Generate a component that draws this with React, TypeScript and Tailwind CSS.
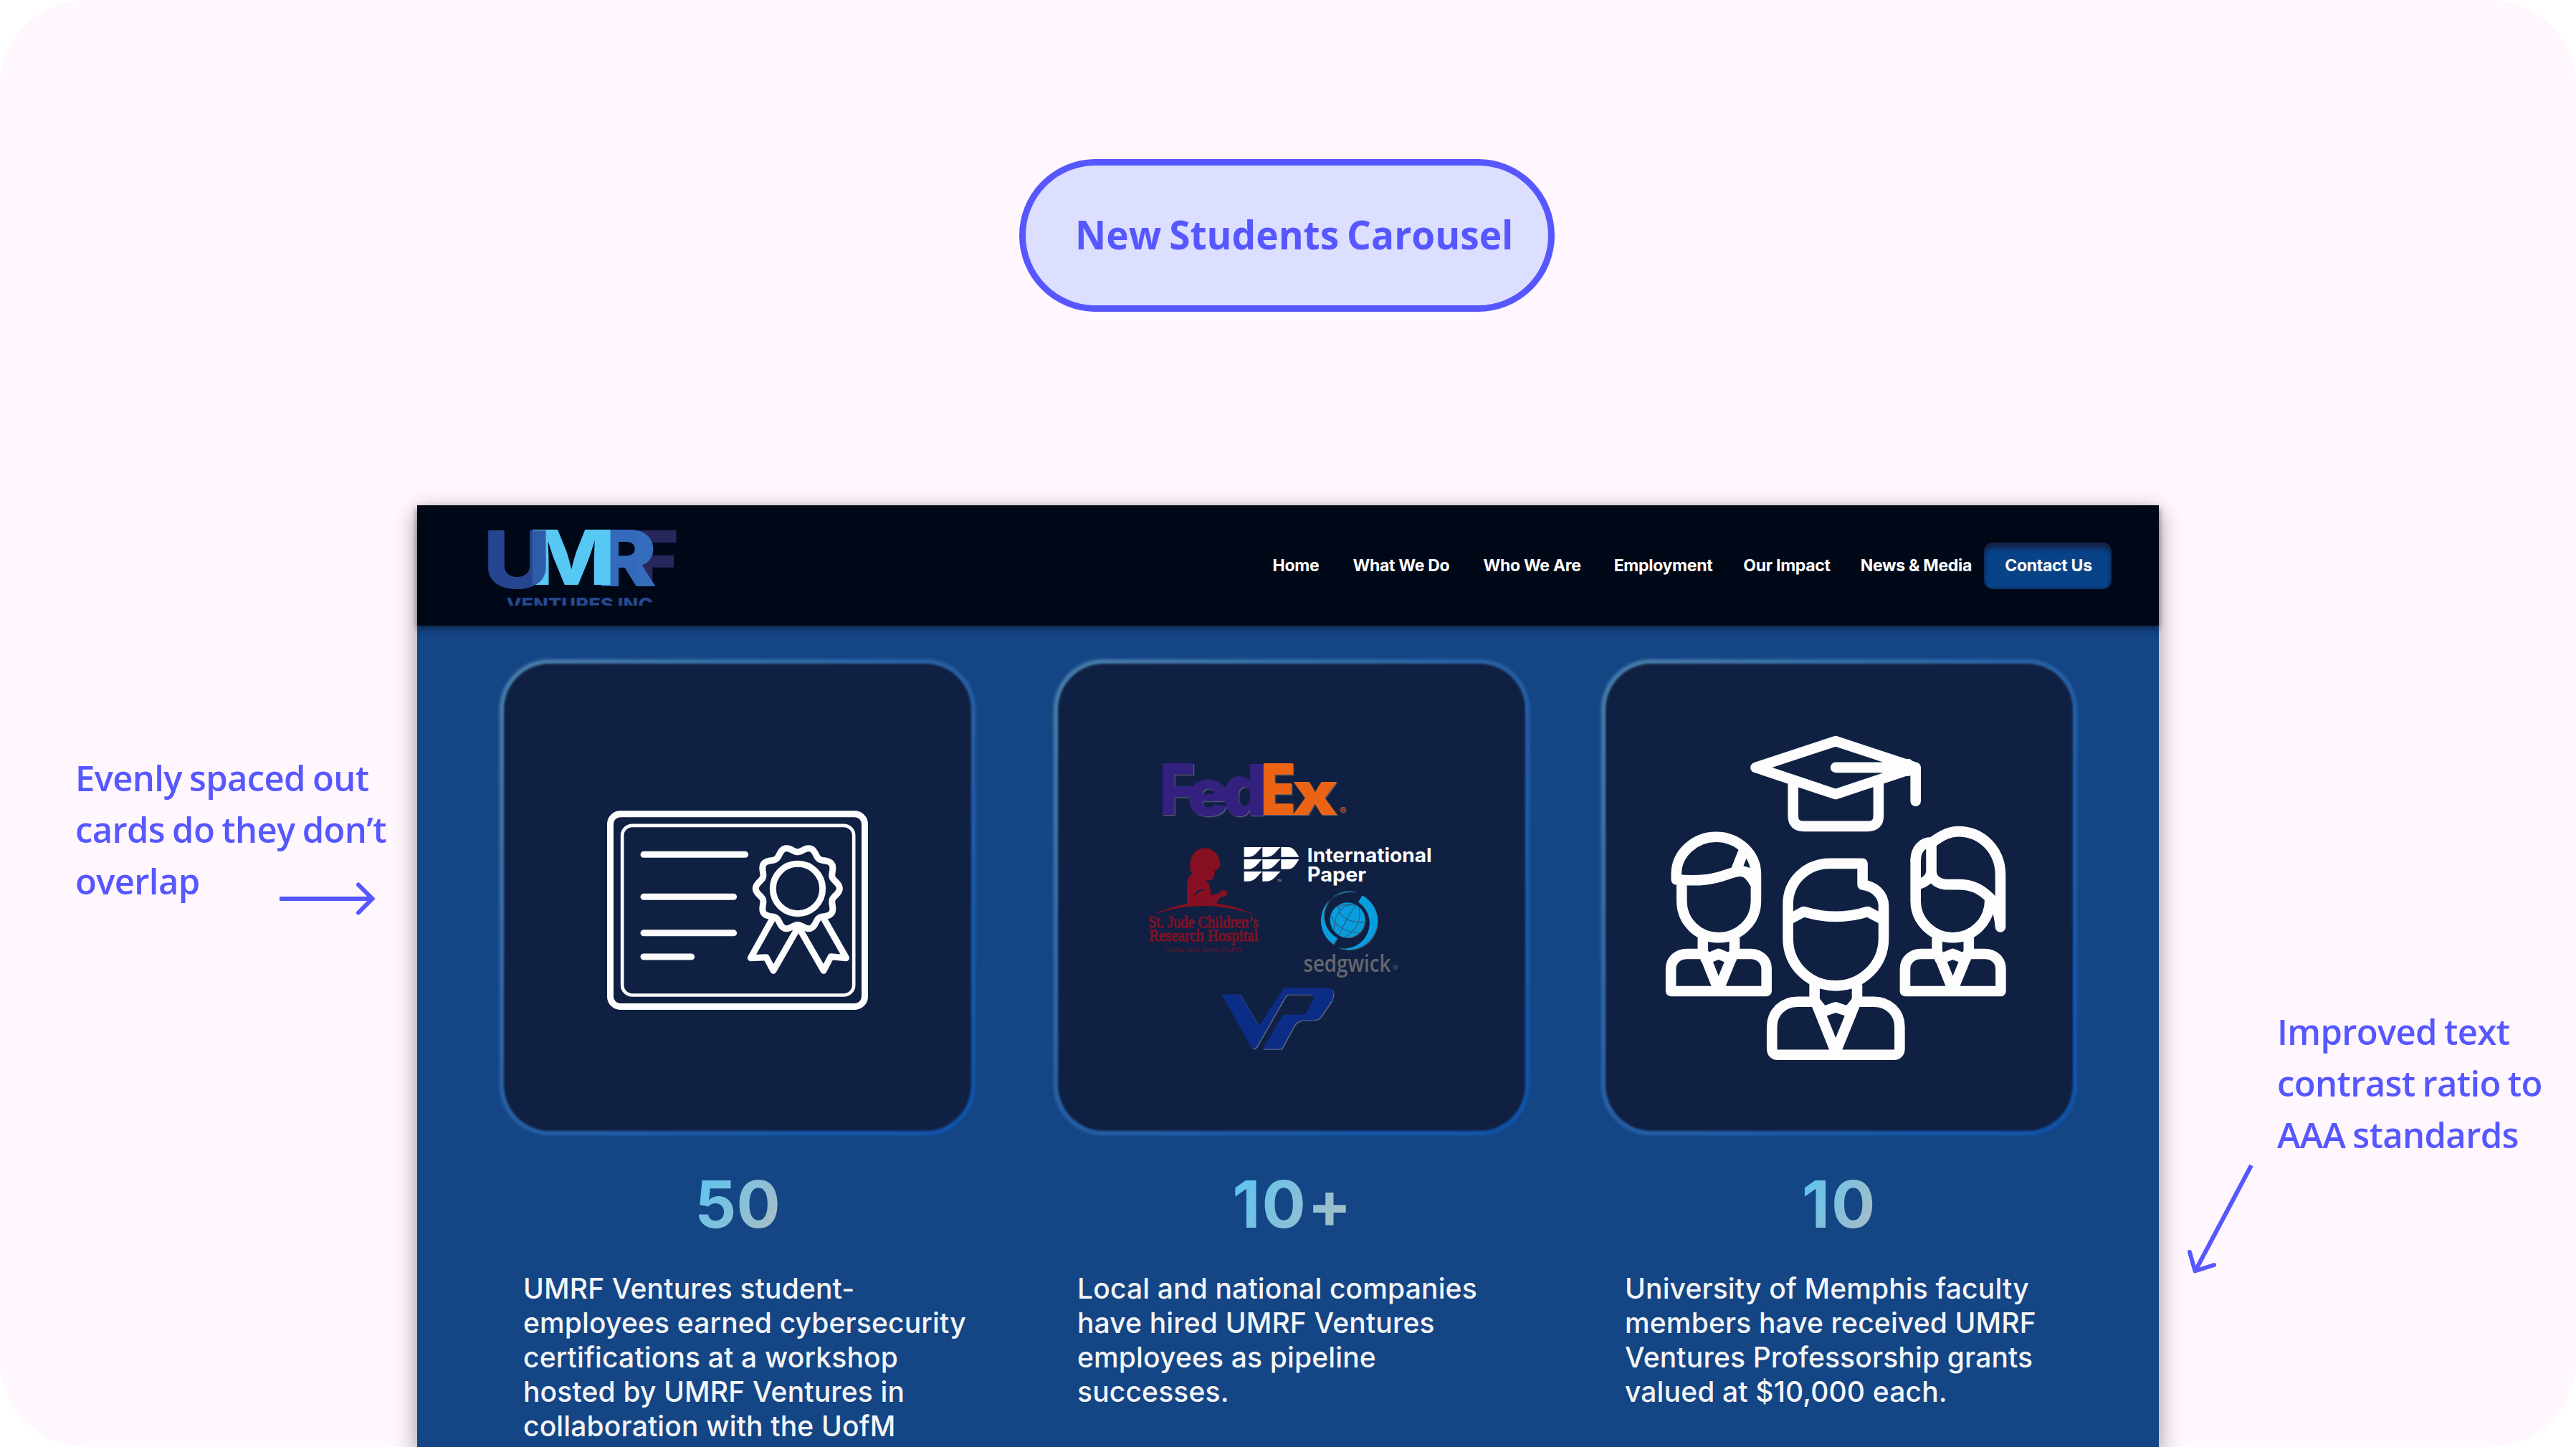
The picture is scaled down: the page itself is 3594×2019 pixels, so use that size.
import React from "react";

const INDIGO = "#5757ff";

const measure = (() => {
  let ctx: CanvasRenderingContext2D | null = null;
  return (text: string, font: string) => {
    if (!ctx) ctx = document.createElement("canvas").getContext("2d");
    ctx!.font = font;
    return ctx!.measureText(text);
  };
})();

type FitProps = {
  text: string;
  x: number;
  y: number;
  width: number;
  height: number;
  fill: string;
  family?: string;
  weight?: number;
  italic?: boolean;
  opacity?: number;
  outline?: number;
};

/** SVG text stretched so that its ink fills width × height above the baseline y. */
function FitText({ text, x, y, width, height, fill, family = "Inter", weight = 700, italic = false, opacity = 1, outline = 0 }: FitProps) {
  const m = measure(text, `${italic ? "italic " : ""}${weight} 200px "${family}"`);
  const sx = width / (m.actualBoundingBoxLeft + m.actualBoundingBoxRight);
  const sy = height / m.actualBoundingBoxAscent;
  return (
    <text
      transform={`translate(${x + m.actualBoundingBoxLeft * sx} ${y}) scale(${sx} ${sy})`}
      fontFamily={`"${family}", sans-serif`}
      fontWeight={weight}
      fontStyle={italic ? "italic" : "normal"}
      fontSize="200"
      fill={fill}
      stroke={outline ? fill : "none"}
      strokeWidth={outline}
      opacity={opacity}
    >
      {text}
    </text>
  );
}

function UmrfLogo() {
  return (
    <svg className="block h-[106px] w-[263px]" viewBox="237 177 515 317" preserveAspectRatio="none" aria-label="UMRF Ventures Inc">
      <FitText text="F" x={645} y={412} width={106} height={235} weight={900} fill="#28275c" />
      <FitText text="R" x={545} y={413} width={150} height={236} weight={900} fill="#3671c3" opacity={0.95} />
      <FitText text="M" x={358} y={407} width={214} height={230} weight={800} fill="#57c7f4" />
      <FitText text="U" x={237} y={421} width={159} height={244} weight={800} fill="#2b4f9f" opacity={0.88} />
      <FitText text="VENTURES INC" x={288} y={514} width={397} height={54} weight={800} fill="#27488f" />
    </svg>
  );
}

const nav = [
  { label: "Home", gap: "ml-0" },
  { label: "What We Do", gap: "ml-[47px]" },
  { label: "Who We Are", gap: "ml-[47px]" },
  { label: "Employment", gap: "ml-[46px]" },
  { label: "Our Impact", gap: "ml-[43px]" },
  { label: "News & Media", gap: "ml-[42px]" },
];

function Header() {
  return (
    <header className="relative z-10 flex h-[168px] items-center bg-[#000818] pr-[66px] pl-[99px] shadow-[0_4px_8px_rgba(0,0,0,0.45)]">
      <div className="mt-[6px]">
        <UmrfLogo />
      </div>
      <nav className="ml-auto flex items-center text-[23px] leading-[28px] font-bold tracking-[-0.3px] whitespace-nowrap text-white">
        {nav.map((item) => (
          <a key={item.label} className={item.gap}>
            {item.label}
          </a>
        ))}
        <a className="ml-[17px] flex h-[65px] w-[178px] items-center justify-center rounded-[13px] bg-[#084388] pl-[2px] shadow-[inset_0_8px_6px_#14234a,inset_0_0_4px_#14234a]">
          <span className="-mt-[1px]">Contact Us</span>
        </a>
      </nav>
    </header>
  );
}

function sealPath(cx: number, cy: number) {
  const pts: string[] = [];
  for (let i = 0; i < 240; i++) {
    const a = (i / 240) * Math.PI * 2;
    const r = 164 + 11.5 * Math.cos(10 * a);
    pts.push(`${(cx + r * Math.cos(a)).toFixed(1)} ${(cy + r * Math.sin(a)).toFixed(1)}`);
  }
  return `M${pts.join("L")}Z`;
}

function CertificateIcon() {
  return (
    <svg className="h-[320px] w-[420px]" viewBox="0 0 1260 960" fill="none" stroke="#fdfdfd" strokeWidth="27" strokeLinecap="round" strokeLinejoin="round">
      <rect x="94.5" y="77.5" width="1065" height="806" rx="42" />
      <rect x="144.5" y="125.5" width="969" height="710" rx="42" strokeWidth="14" />
      <path d="M234 247H659M234 424H611M234 575.5H611M234 675H434" />
      <path d="M770 522L682 680L747 677L777 733L876 560M992 522L1082 680L1018 674L987 733L888 560" />
      <path d={sealPath(878.5, 389)} fill="#102042" />
      <circle cx="879" cy="390" r="104" />
    </svg>
  );
}

function StudentBody() {
  return (
    <>
      <path d="M349 958V1019H299C270 1019 249 1045 249 1080V1170H548V1080C548 1045 527 1019 498 1019H448V958" />
      <path d="M354 1022L398 1165L443 1022M358 1041L398 1019L438 1041" />
    </>
  );
}

function StudentsIcon() {
  return (
    <svg
      className="h-[540px] w-[700px] [&_path]:[vector-effect:non-scaling-stroke]"
      viewBox="0 0 1568 1568"
      preserveAspectRatio="none"
      fill="none"
      stroke="#fdfdfd"
      strokeWidth="14.6"
      strokeLinecap="round"
      strokeLinejoin="round"
    >
      <path d="M764 157L1014 264L764 372L514 264ZM764 264H1014V400" />
      <path d="M930 264L990 250V278Z" fill="#fdfdfd" />
      <path d="M631 335V460Q631 502 664 502H864Q898 502 898 460V335" />
      <path d="M283 728V805C283 890 336 953 398 953C460 953 515 890 515 805V697C515 615 460 545 390 545C325 545 266 610 266 697V718C345 727 385 715 425 697C462 680 478 680 492 698C502 710 507 722 515 740" />
      <path d="M476 604L454 676L490 690" />
      <StudentBody />
      <path d="M1014 640V805C1014 890 1070 953 1130 953C1192 953 1246 890 1246 800" />
      <path d="M1066 567C1100 535 1122 523 1147 523C1222 523 1279 600 1279 700V910C1276 860 1268 822 1246 792C1216 755 1190 738 1148 738H1115C1086 738 1063 718 1063 685V567C1035 567 1014 595 1014 640M1063 690C1058 718 1042 730 1020 738" />
      <g transform="translate(732 0)">
        <StudentBody />
      </g>
      <path d="M615 955V818C615 725 672 653 745 653H848V739C886 745 914 780 914 825V955C914 1065 846 1148 764 1148C682 1148 615 1065 615 955Z" />
      <path d="M618 880L664 848Q768 888 864 848L911 880" />
      <path d="M698 1146V1213H645C600 1213 565 1255 565 1315V1405Q567 1428 582 1428H947Q962 1428 964 1405V1315C964 1255 929 1213 884 1213H831V1146" />
      <path d="M702 1215L764 1416L827 1215M722 1254L764 1235L808 1254" />
      <path d="M702 1215L725 1252M827 1215L804 1252" />
    </svg>
  );
}

function PartnerLogos() {
  return (
    <svg className="h-[480px] w-[480px]" viewBox="0 0 1440 1440">
      <g className="[filter:drop-shadow(4px_4px_1px_rgba(150,150,150,0.5))]">
        <FitText text="F" x={185} y={351} width={130} height={216} weight={900} fill="#33207f" />
        <FitText text="e" x={297} y={354} width={158} height={150} weight={900} fill="#33207f" />
        <FitText text="d" x={446} y={353} width={163} height={218} weight={900} fill="#33207f" />
        <FitText text="E" x={609} y={351} width={124} height={216} weight={900} fill="#ec6413" />
        <FitText text="x" x={731} y={351} width={187} height={137} weight={900} fill="#ec6413" />
      </g>
      <text x="928" y="352" fontFamily="Inter" fontWeight="700" fontSize="42" fill="#cf5c24">
        ®
      </text>

      <g fill="#861022">
        <path d="M304 585L296 578L304 572L296 565L302 560C300 525 325 490 362 490C400 490 428 522 427 565C425 575 412 582 402 588L406 602L400 607C400 618 392 626 380 625L368 623C382 640 388 660 389 688L420 680L436 664L442 666L440 670L456 668C460 678 456 688 440 694L428 696C422 704 416 712 412 722Q355 712 288 724V650C288 625 296 605 312 596Z" />
        <path d="M143 770Q355 666 572 770Q355 694 143 770Z" />
        <path d="M318 688C325 668 345 660 366 664C350 668 335 674 324 688Z" fill="#102042" />
      </g>
      <FitText text="St. Jude Children’s" x={131} y={823} width={454} height={46} family="Liberation Serif" weight={400} outline={8} fill="#861022" />
      <FitText text="Research Hospital" x={131} y={880} width={454} height={46} family="Liberation Serif" weight={400} outline={8} fill="#861022" />
      <FitText text="Finding cures. Saving children." x={195} y={925} width={323} height={21} family="Liberation Serif" weight={400} italic fill="#701329" />

      <g fill="#ffffff">
        <path d="M527 486H603Q592 496 582 508Q566 527 546 527H527ZM604 486H680Q669 496 659 508Q643 527 623 527H604ZM682 486H712C735 486 745 508 757 527H682Z" />
        <path d="M527 537H603Q592 547 582 559Q566 578 546 578H527ZM604 537H680Q669 547 659 559Q643 578 623 578H604ZM682 537H757C745 556 735 578 712 578H682Z" />
        <path d="M527 588H603Q592 598 582 610Q566 629 546 629H527ZM604 588H680Q669 598 659 610Q643 629 623 629H604Z" />
      </g>
      <text x="665" y="629" fontFamily="Inter" fontSize="12" fill="#cfd4de">
        TM
      </text>
      <FitText text="International" x={797} y={549} width={511} height={63} weight={650} fill="#ffffff" />
      <FitText text="Paper" x={797} y={629} width={240} height={61} weight={650} fill="#ffffff" />

      <g className="[filter:drop-shadow(3px_3px_1px_rgba(150,150,150,0.45))]" fill="#069edf">
        <path d="M1003 677A121 121 0 0 0 901 893L917 866A104 104 0 0 1 1003 677Z" />
        <path d="M1022 688A121 121 0 0 1 920 907A106 106 0 0 0 1005 716Z" />
        <circle cx="960" cy="791" r="73" />
      </g>
      <g fill="none" stroke="#2b5f86" strokeWidth="3.5">
        <path d="M996 729Q945 800 926 855M925 728C915 775 965 805 1036 801M889 770C900 810 960 850 1008 842M1008 738C1020 800 990 840 950 862M996 728C940 720 905 760 903 835M917 738Q935 722 996 728" />
      </g>
      <FitText text="sedgwick" x={779} y={1008} width={362} height={74} family="Open Sans" weight={650} fill="#66676b" />
      <text x="1149" y="1005" fontFamily="Inter" fontSize="34" fill="#5a5c64">
        ®
      </text>

      <path
        className="[filter:drop-shadow(3px_3px_1px_rgba(160,160,165,0.6))]"
        d="M434 1102H511L590 1235L686 1085Q692 1075 705 1075H878Q906 1078 901 1105L895 1128L850 1195Q838 1211 815 1211H772Q752 1212 738 1232L684 1331H606L690 1187H772Q784 1186 790 1176L817 1125Q822 1103 808 1103H715Q706 1103 700 1112L580 1322Q568 1336 558 1326Z"
        fill="#0c2d86"
      />
    </svg>
  );
}

function Tile({ children }: { children: React.ReactNode }) {
  return (
    <div className="relative h-[660px] w-[660px]">
      <div className="absolute -inset-[2px] rounded-[70px] bg-[linear-gradient(135deg,#4c84ad_0%,#2b65a9_45%,#0f55b0_100%)] blur-[2px]" />
      <div className="absolute inset-[4px] rounded-[64px] bg-[#102042] blur-[1.5px]" />
      <div className="relative h-full w-full">{children}</div>
    </div>
  );
}

type StatProps = { value: string; lines: string[]; shift: string; valueClass: string; children: React.ReactNode };

function Stat({ value, lines, shift, valueClass, children }: StatProps) {
  return (
    <section className={`w-[660px] shrink-0 ${shift}`}>
      <Tile>{children}</Tile>
      <div className="mt-[43px] flex justify-center">
        <span
          className={`bg-[linear-gradient(120deg,#5fc4ee_10%,#a9bdc6_90%)] bg-clip-text text-[91px] leading-[110px] font-bold text-transparent ${valueClass}`}
        >
          {value}
        </span>
      </div>
      <p className="mt-[39px] pl-[31px] text-[39px] leading-[48px] font-[450] tracking-[0.15px] whitespace-nowrap text-[#f4f5f7]">
        {lines.map((line) => (
          <span key={line} className="block">
            {line}
          </span>
        ))}
      </p>
    </section>
  );
}

function Note({ lines }: { lines: string[] }) {
  return (
    <p className="font-['Open_Sans'] text-[49px] leading-[72px] font-[540] tracking-[-0.65px] whitespace-nowrap text-[#5757ff] [word-spacing:-2px]">
      {lines.map((line) => (
        <span key={line} className="block">
          {line}
        </span>
      ))}
    </p>
  );
}

export default function App() {
  return (
    <div className="h-[2019px] w-[3594px] overflow-hidden bg-white font-['Inter',sans-serif]">
      <div className="flex h-full w-full flex-col overflow-hidden rounded-[120px] bg-[#fff7fd]">
        <div className="mt-[222px] ml-[1422px] flex h-[213px] w-[747px] shrink-0 items-center rounded-full border-[9px] border-[#5757ff] bg-[#dcdfff] pb-[6px] pl-[69px]">
          <h1 className="origin-left scale-x-[0.95] font-['Open_Sans'] text-[56px] leading-[76px] font-bold whitespace-nowrap text-[#5757ff] [word-spacing:-3px]">
            New Students Carousel
          </h1>
        </div>

        <div className="mt-[270px] flex grow items-start">
          <aside className="w-[582px] shrink-0 pt-[344px] pl-[105px]">
            <Note lines={["Evenly spaced out", "cards do they don’t", "overlap"]} />
            <svg className="-mt-[35px] ml-[279px] h-[50px] w-[146px]" viewBox="0 0 146 50" fill="none" stroke={INDIGO} strokeWidth="6">
              <path d="M6 24H136" />
              <path d="M116 4.500L135.500 24L116 43.500" strokeLinecap="round" />
            </svg>
          </aside>

          <main className="flex h-[1314px] w-[2430px] shrink-0 flex-col bg-[#144585] shadow-[0_10px_30px_rgba(0,0,0,0.42)]">
            <Header />
            <div className="flex items-start pt-[49px] pl-[117px]">
              <Stat
                value="50"
                shift="ml-0"
                valueClass="tracking-normal"
                lines={[
                  "UMRF Ventures student-",
                  "employees earned cybersecurity",
                  "certifications at a workshop",
                  "hosted by UMRF Ventures in",
                  "collaboration with the UofM",
                ]}
              >
                <div className="pt-[188px] pl-[121px]">
                  <CertificateIcon />
                </div>
              </Stat>
              <Stat
                value="10+"
                shift="ml-[113px]"
                valueClass="ml-[3px] tracking-[2px]"
                lines={["Local and national companies", "have hired UMRF Ventures", "employees as pipeline", "successes."]}
              >
                <div className="pt-[98px] pl-[88px]">
                  <PartnerLogos />
                </div>
              </Stat>
              <Stat
                value="10"
                shift="ml-[104px]"
                valueClass="tracking-[2px]"
                lines={[
                  "University of Memphis faculty",
                  "members have received UMRF",
                  "Ventures Professorship grants",
                  "valued at $10,000 each.",
                ]}
              >
                <div className="-ml-[16px] w-[700px] pt-[58px]">
                  <StudentsIcon />
                </div>
              </Stat>
            </div>
          </main>

          <aside className="w-[582px] shrink-0 pt-[698px] pl-[165px]">
            <Note lines={["Improved text", "contrast ratio to", "AAA standards"]} />
            <svg className="-ml-[127px] h-[170px] w-[100px]" viewBox="3050 1619 100 170" fill="none" stroke={INDIGO} strokeWidth="6">
              <path d="M3141 1626L3063 1773" />
              <path d="M3055 1747L3062.500 1773.500L3089 1765" strokeLinecap="round" strokeLinejoin="round" />
            </svg>
          </aside>
        </div>
      </div>
    </div>
  );
}
